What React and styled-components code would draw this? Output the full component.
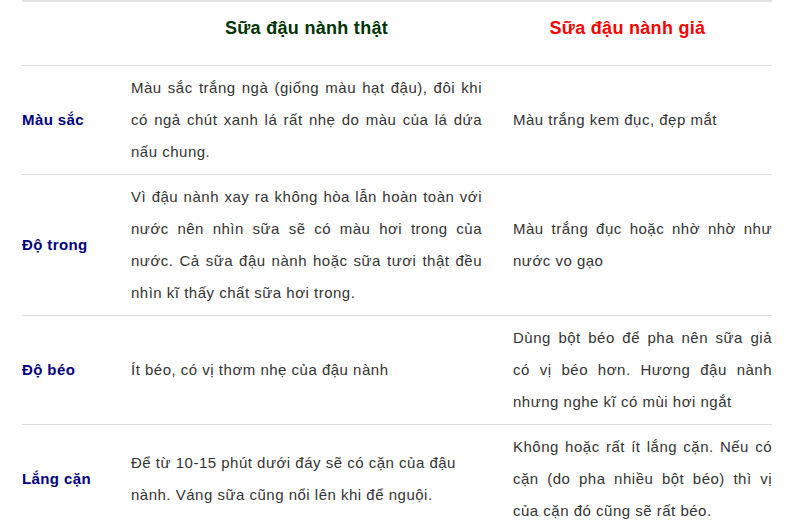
import React from "react";
import styled, { createGlobalStyle } from "styled-components";

const Global = createGlobalStyle`
  html, body { margin: 0; padding: 0; background: #fff; }
  body { font-family: "Liberation Sans", Arial, sans-serif; }
`;

const Page = styled.div`
  padding: 0 14px 0 22px;
  width: 786px;
  box-sizing: border-box;
`;

const Table = styled.div`
  display: grid;
  grid-template-columns: 109px 382px 259px;
  border-top: 2px solid #e3e3e3;
`;

const Row = styled.div`
  display: contents;
`;

const HeadCell = styled.div`
  height: 63px;
  box-sizing: border-box;
  padding-bottom: 10px;
  display: flex;
  align-items: center;
  justify-content: center;
  font-weight: bold;
  font-size: 18px;
  letter-spacing: 0.3px;
  color: ${(p) => p.$color || "#333"};
  padding-right: ${(p) => p.$pr || 0}px;
`;

const Cell = styled.div`
  border-top: 1px solid #dcdcdc;
  padding: 6px ${(p) => (p.$last ? 0 : 31)}px 6px 0;
  display: flex;
  align-items: center;
  font-size: 15px;
  letter-spacing: 0.5px;
  line-height: 32px;
  color: #333;
  text-align: ${(p) => p.$align || "justify"};
`;

const Label = styled(Cell)`
  font-weight: bold;
  letter-spacing: 0.4px;
  color: #000080;
`;

const rows = [
  {
    label: "Màu sắc",
    real: "Màu sắc trắng ngà (giống màu hạt đậu), đôi khi có ngả chút xanh lá rất nhẹ do màu của lá dứa nấu chung.",
    fake: "Màu trắng kem đục, đẹp mắt",
  },
  {
    label: "Độ trong",
    real: "Vì đậu nành xay ra không hòa lẫn hoàn toàn với nước nên nhìn sữa sẽ có màu hơi trong của nước. Cả sữa đậu nành hoặc sữa tươi thật đều nhìn kĩ thấy chất sữa hơi trong.",
    fake: "Màu trắng đục hoặc nhờ nhờ như nước vo gạo",
  },
  {
    label: "Độ béo",
    real: "Ít béo, có vị thơm nhẹ của đậu nành",
    fake: "Dùng bột béo để pha nên sữa giả có vị béo hơn. Hương đậu nành nhưng nghe kĩ có mùi hơi ngắt",
  },
  {
    label: "Lắng cặn",
    real: "Để từ 10-15 phút dưới đáy sẽ có cặn của đậu nành. Váng sữa cũng nổi lên khi để nguội.",
    realAlign: "left",
    fake: "Không hoặc rất ít lắng cặn. Nếu có cặn (do pha nhiều bột béo) thì vị của cặn đó cũng sẽ rất béo.",
  },
];

const Text = styled.div`
  width: 100%;
`;

export default function App() {
  return (
    <>
      <Global />
      <Page>
        <Table>
          <Row>
            <HeadCell />
            <HeadCell $color="#003300" $pr={31}>Sữa đậu nành thật</HeadCell>
            <HeadCell $color="#ff0000" $pr={30}>Sữa đậu nành giả</HeadCell>
          </Row>
          {rows.map((r) => (
            <Row key={r.label}>
              <Label>{r.label}</Label>
              <Cell $align={r.realAlign}><Text>{r.real}</Text></Cell>
              <Cell $last><Text>{r.fake}</Text></Cell>
            </Row>
          ))}
        </Table>
      </Page>
    </>
  );
}
